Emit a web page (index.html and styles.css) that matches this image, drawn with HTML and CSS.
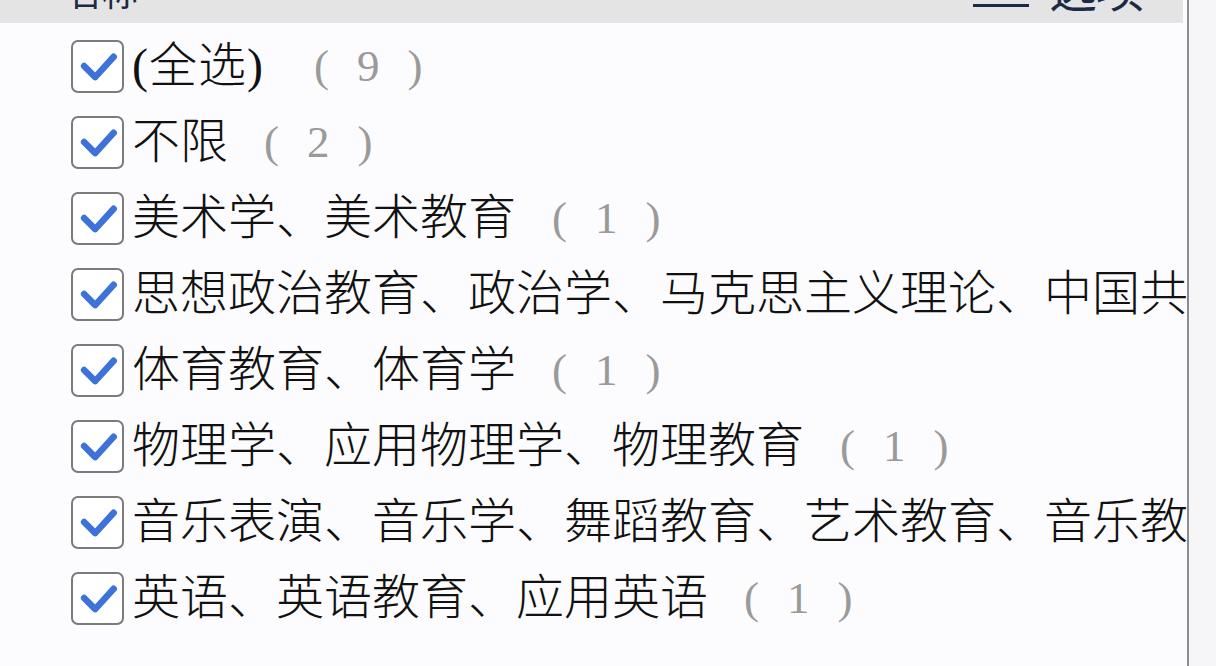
FILE: index.html
```html
<!DOCTYPE html>
<html lang="zh-CN">
<head>
<meta charset="utf-8">
<title>筛选</title>
<link rel="stylesheet" href="styles.css">
</head>
<body>
<div class="page">
  <div class="panel">
    <div class="head">
      <span class="h-left">名称</span>
      <span class="h-right"><span class="menu-ic"><i></i><i></i><i></i></span><span class="h-text">选项</span></span>
    </div>
    <ul class="list">
      <li class="row row-all"><span class="cb"><svg viewBox="0 0 53 53"><path d="M12 26 L24 38 L44 16"/></svg></span><span class="label">(全选)</span><span class="count"><span class="p">(</span><span class="n">9</span><span class="p">)</span></span></li>
      <li class="row"><span class="cb"><svg viewBox="0 0 53 53"><path d="M12 26 L24 38 L44 16"/></svg></span><span class="label">不限</span><span class="count"><span class="p">(</span><span class="n">2</span><span class="p">)</span></span></li>
      <li class="row"><span class="cb"><svg viewBox="0 0 53 53"><path d="M12 26 L24 38 L44 16"/></svg></span><span class="label">美术学、美术教育</span><span class="count"><span class="p">(</span><span class="n">1</span><span class="p">)</span></span></li>
      <li class="row"><span class="cb"><svg viewBox="0 0 53 53"><path d="M12 26 L24 38 L44 16"/></svg></span><span class="label">思想政治教育、政治学、马克思主义理论、中国共产党历史</span><span class="count"><span class="p">(</span><span class="n">1</span><span class="p">)</span></span></li>
      <li class="row"><span class="cb"><svg viewBox="0 0 53 53"><path d="M12 26 L24 38 L44 16"/></svg></span><span class="label">体育教育、体育学</span><span class="count"><span class="p">(</span><span class="n">1</span><span class="p">)</span></span></li>
      <li class="row"><span class="cb"><svg viewBox="0 0 53 53"><path d="M12 26 L24 38 L44 16"/></svg></span><span class="label">物理学、应用物理学、物理教育</span><span class="count"><span class="p">(</span><span class="n">1</span><span class="p">)</span></span></li>
      <li class="row"><span class="cb"><svg viewBox="0 0 53 53"><path d="M12 26 L24 38 L44 16"/></svg></span><span class="label">音乐表演、音乐学、舞蹈教育、艺术教育、音乐教育</span><span class="count"><span class="p">(</span><span class="n">1</span><span class="p">)</span></span></li>
      <li class="row"><span class="cb"><svg viewBox="0 0 53 53"><path d="M12 26 L24 38 L44 16"/></svg></span><span class="label">英语、英语教育、应用英语</span><span class="count"><span class="p">(</span><span class="n">1</span><span class="p">)</span></span></li>
    </ul>
  </div>
  <div class="divider"></div>
  <div class="side"></div>
</div>
</body>
</html>
```
FILE: styles.css
```css
html, body {
  margin: 0;
  padding: 0;
}
body {
  width: 1216px;
  height: 666px;
  overflow: hidden;
  background: #fcfcfe;
  font-family: "Liberation Serif", "Noto Sans CJK SC", serif;
  color: #111;
}
.page {
  display: grid;
  grid-template-columns: 1187px 2px 1fr;
  height: 666px;
}
.panel {
  overflow: hidden;
  background: #fcfcfe;
}
.divider {
  background: #8d8d8f;
}
.side {
  background: #f6f6f8;
}
.head {
  height: 23px;
  margin-right: 4px;
  background: #e4e4e4;
  display: flex;
  justify-content: space-between;
  align-items: flex-end;
  overflow: hidden;
  color: #1d2a45;
  font-family: "Noto Sans CJK SC", sans-serif;
}
.h-left {
  font-size: 36px;
  line-height: 36px;
  margin-left: 66px;
  margin-bottom: 15px;
}
.h-right {
  display: flex;
  align-items: flex-end;
  margin-right: 40px;
}
.menu-ic {
  display: flex;
  flex-direction: column;
  gap: 8px;
  width: 56px;
  margin-bottom: 16px;
  margin-right: 20px;
}
.menu-ic i {
  display: block;
  height: 3px;
  background: #1d2a45;
}
.h-text {
  font-size: 48px;
  line-height: 48px;
  margin-bottom: 13px;
  letter-spacing: -1px;
}
.list {
  list-style: none;
  margin: 0;
  padding: 5px 0 0 71px;
}
.row {
  height: 76px;
  display: flex;
  align-items: center;
  white-space: nowrap;
}
.cb {
  flex: none;
  width: 49px;
  height: 49px;
  border: 2px solid #7b7b7d;
  border-radius: 7px;
  background: #fff;
  margin-right: 8px;
  display: flex;
}
.cb svg {
  width: 49px;
  height: 49px;
}
.cb path {
  fill: none;
  stroke: #3d72d8;
  stroke-width: 7;
  stroke-linecap: round;
  stroke-linejoin: round;
}
.label {
  font-size: 48px;
  line-height: 76px;
  font-weight: 300;
}
.row-all .label {
  letter-spacing: 1px;
  margin-right: 14px;
}
.count {
  font-size: 45px;
  line-height: 76px;
  color: #9a9a9a;
  margin-left: 36px;
  display: flex;
}
.count .n {
  margin-left: 28px;
  margin-right: 28px;
}
```
